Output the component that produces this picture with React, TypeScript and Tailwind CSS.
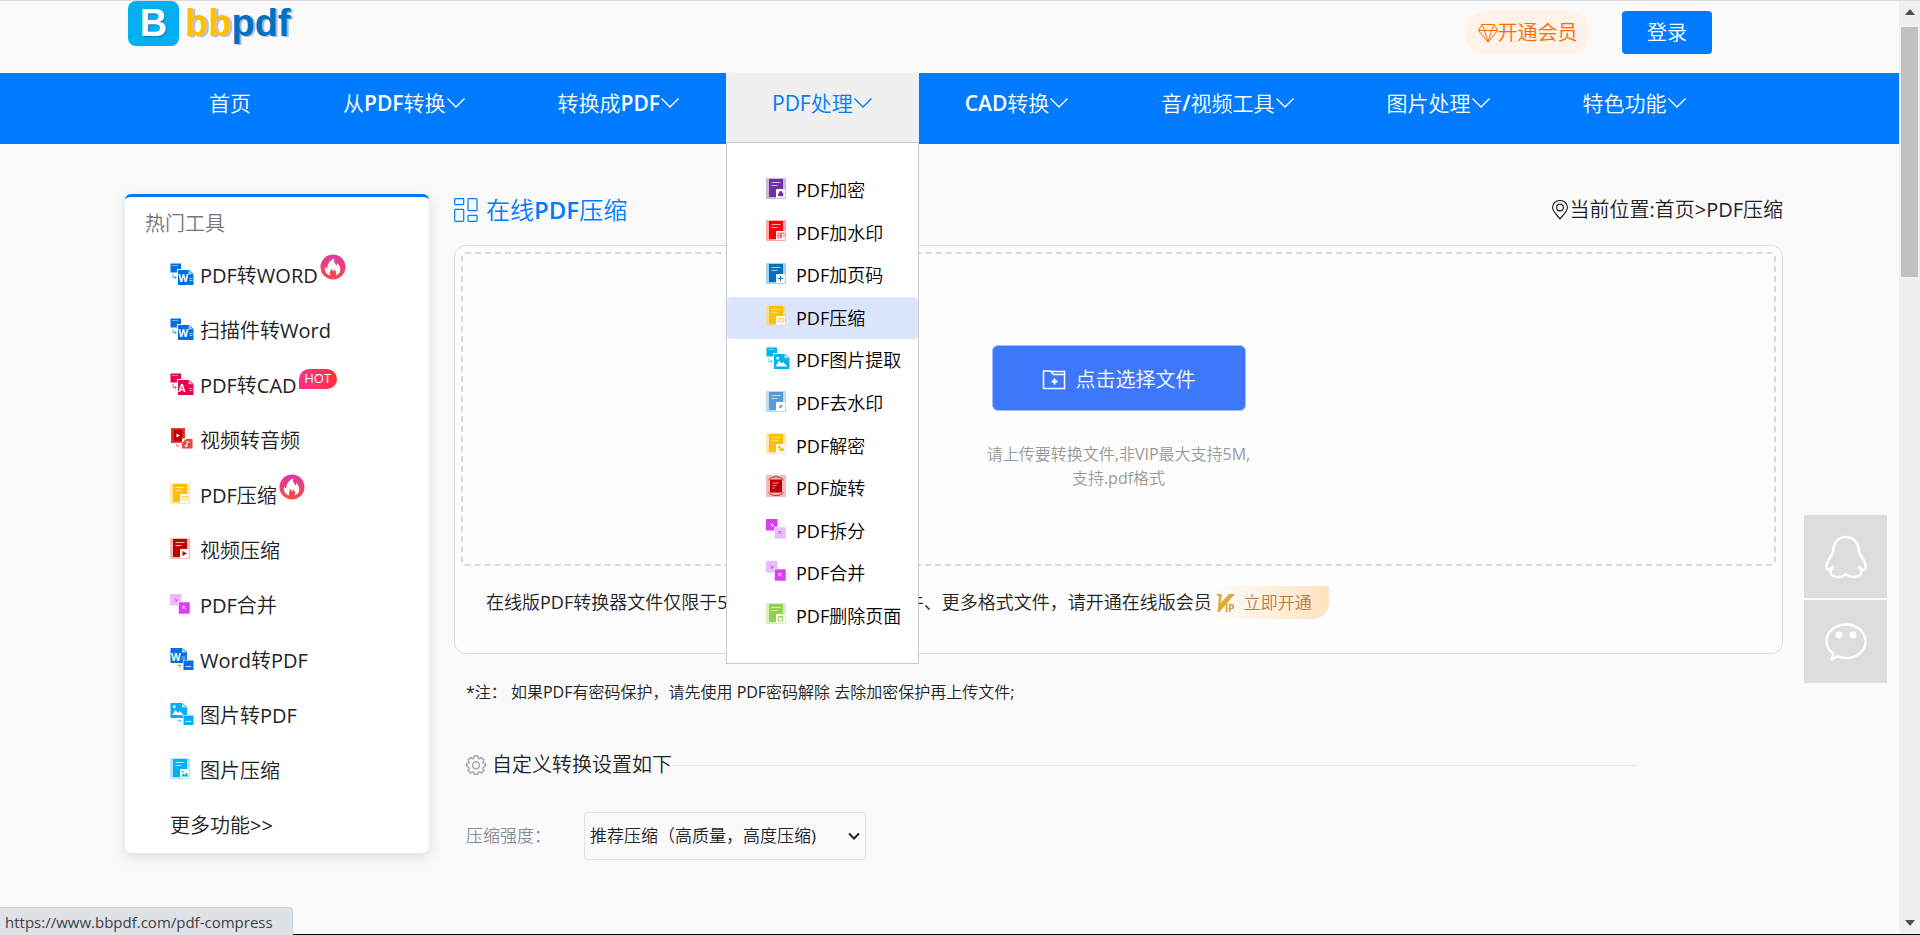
import React from "react";

type Glyph = "lock" | "stamp" | "plus" | "tag" | "drop" | "unlock" | "play" | "image" | "trash";

/* A document on a pale tile, with a small action badge in its corner. */
function DocIcon({ color, pale, glyph }: { color: string; pale: string; glyph: Glyph }) {
  return (
    <svg viewBox="0 0 20 21" className="h-[21px] w-5" aria-hidden="true">
      <rect width="20" height="21" rx="1" fill={pale} />
      <path d="M3 1h14v18H3z" fill={color} />
      <path d="M5.5 4.5h9M5.5 7.5h6" stroke={pale} strokeWidth="1" />
      <rect x="10" y="11" width="9" height="9" rx="1" fill="#fff" />
      {glyph === "lock" && <path d="M12.5 15h4.5v3h-4.5zM13.5 15v-1.5h2.5V15" fill={color} stroke={color} strokeWidth=".5" />}
      {glyph === "unlock" && <path d="M13.5 15.5h4V18h-4zM12.3 15v-1.8h2V15" fill={color} stroke={color} strokeWidth=".6" />}
      {glyph === "stamp" && <path d="M12 13h2.5v5M12 13v5h2M15.5 18v-5H18v4M12 15.5h2.5" fill="none" stroke={color} strokeWidth=".6" />}
      {glyph === "plus" && <path d="M14.5 13v5M12 15.5h5" stroke={color} strokeWidth="1" />}
      {glyph === "tag" && <path d="M12 13.5h6M12 13.5v3h2l1 1.5 1-1.5h2v-3M13.5 15h3" fill="none" stroke={color} strokeWidth=".7" />}
      {glyph === "drop" && <path d="M13 17.5l.5-2.5 2-1.5 1 1.5-1.5 2z" fill={color} />}
      {glyph === "play" && <path d="M12.5 13l4.5 2.5-4.5 2.5z" fill={color} />}
      {glyph === "image" && <path d="M11 18.5l2.3-3 1.4 1.4 1.6-2.4 2.2 4zM12 13h1.5v1.5H12z" fill={color} />}
      {glyph === "trash" && <path d="M12.5 14h4v4.2h-4zM12 13.6h5" fill="none" stroke={color} strokeWidth=".9" />}
    </svg>
  );
}

/* Small source page handing over to a large target page. */
function ToIcon({ color, letter }: { color: string; letter?: string }) {
  return (
    <svg viewBox="0 0 24 22" className="h-[22px] w-6" aria-hidden="true">
      <rect x=".5" y=".5" width="10.5" height="9" fill={color} />
      <path d="M2 2.5h6" stroke="#fff" strokeWidth=".8" opacity=".6" />
      <path d="M3 11v3.5h3M4.8 13l1.5 1.5L4.8 16" fill="none" stroke={color} strokeWidth=".9" opacity=".7" />
      <path d="M7 6h12l5 4v12H7z" fill="#fff" />
      <path d="M8 7h11l4.5 4v11H8z" fill={color} />
      <path d="M18.5 7.5v3.8H23z" fill="#fff" opacity=".7" />
      {letter ? (
        <>
          <text x="8.5" y="19" fontSize="10" fontWeight="700" fill="#fff" fontFamily="Open Sans, sans-serif">{letter}</text>
          <path d="M19.5 15.5h3M19.5 17.5h3" stroke="#fff" strokeWidth=".8" opacity=".8" />
        </>
      ) : (
        <path d="M9.5 19.5l3.500-6 2.500 3 1.500-1.500 4.500 4.500zM10.500 10H13v2.500h-2.500z" fill="#fff" />
      )}
    </svg>
  );
}

/* Large source page handing over to a small target page. */
function FromIcon({ color, letter }: { color: string; letter?: string }) {
  return (
    <svg viewBox="0 0 24 22" className="h-[22px] w-6" aria-hidden="true">
      <path d="M.5 0H12l5 4v11H.5z" fill={color} />
      <path d="M12 .5v4h4.5z" fill="#fff" opacity=".7" />
      {letter ? (
        <>
          <text x="1" y="12.5" fontSize="10" fontWeight="700" fill="#fff" fontFamily="Open Sans, sans-serif">{letter}</text>
          <path d="M11.5 9h4M11.5 11h4" stroke="#fff" strokeWidth=".8" opacity=".8" />
        </>
      ) : (
        <path d="M2 12l3.500-5L8 10l1.800-2 3.700 4zM3 2.500h2.500V5H3z" fill="#fff" />
      )}
      <path d="M7.500 17.500h3M9.500 16.500l1.500 2-1.500 1.500" fill="none" stroke={color} strokeWidth=".9" opacity=".7" />
      <rect x="13" y="12" width="11" height="10" fill="#fff" />
      <rect x="13.5" y="12.5" width="10" height="9.5" fill={color} />
      <path d="M15.500 18.500h6" stroke="#fff" strokeWidth="1.2" opacity=".7" />
    </svg>
  );
}

function VideoAudioIcon() {
  return (
    <svg viewBox="0 0 24 22" className="h-[22px] w-6" aria-hidden="true">
      <rect x="1" width="14" height="15" fill="#e8483f" />
      <rect x="3.5" y="1.5" width="9" height="12" fill="#c00000" />
      <path d="M6.500 5.500l3.500 2-3.500 2z" fill="#fff" />
      <path d="M2.200 1v13M13.800 1v13" stroke="#c00000" strokeWidth="1" strokeDasharray="1.5 1.5" />
      <path d="M6 16.500l3 2" stroke="#e8483f" strokeWidth="1" />
      <rect x="12" y="10.5" width="11" height="10.5" fill="#fff" />
      <path d="M16 11h6.500v9.500H12V15z" fill="#e8483f" />
      <path d="M17 18v-4.500l2.500 1" fill="none" stroke="#fff" strokeWidth="1" />
      <circle cx="16" cy="18" r="1.2" fill="#fff" />
    </svg>
  );
}

function PairIcon({ first, second }: { first: string; second: string }) {
  return (
    <svg viewBox="0 0 20 20" className="h-5 w-5" aria-hidden="true">
      <rect width="11.5" height="11.5" fill={first} />
      <rect x="8.5" y="8" width="11.5" height="12" fill={second} stroke="#fff" strokeWidth=".6" />
      <path d="M4 4l3 3M7 4.800V7H4.800" fill="none" stroke={first === "#e7bdfb" ? "#dc3cf5" : "#fff"} strokeWidth=".8" />
      <path d="M13 12.500l3 3M13 15v-2.500h2.500" fill="none" stroke={second === "#e7bdfb" ? "#dc3cf5" : "#fff"} strokeWidth=".8" />
    </svg>
  );
}

function RotateIcon() {
  return (
    <svg viewBox="0 0 20 22" className="h-[22px] w-5" aria-hidden="true">
      <rect width="20" height="22" rx="1" fill="#f0bcbc" />
      <rect x="4" y="4.5" width="12" height="13" fill="#c00000" />
      <path d="M6.500 8h6M6.500 10.500h4M6.500 13h2.500" stroke="#e99" strokeWidth="1" />
      <path d="M2.500 5C6 .8 14 .8 17.500 5M2.500 17.500c3.500 4 11.500 4 15 0" fill="none" stroke="#c8262a" strokeWidth="1" />
    </svg>
  );
}

function FlameBadge() {
  return (
    <svg viewBox="0 0 26 26" className="h-[26px] w-[26px] self-start" aria-hidden="true">
      <defs>
        <linearGradient id="flame" x1="0" y1="0" x2="0" y2="1">
          <stop offset="0" stopColor="#dd37a8" />
          <stop offset="1" stopColor="#fd4a42" />
        </linearGradient>
      </defs>
      <circle cx="13" cy="13" r="12.5" fill="url(#flame)" />
      <path d="M10.500 21.500C6 20.500 4 17 5.200 12.500c.6 1.200 1.300 1.800 2.300 2C7.200 10 9.800 6.500 14.300 4.500c-.8 3 .4 4.700 2 7 .7-.6 1-1.500.8-2.700 3.600 3.400 5.400 10.200-1.300 12.700 1-2.300.4-4-1.200-6-.4 1.200-1 1.700-1.600 2-.2-1-.6-1.700-1.300-2.400-1.700 2-2.400 4.200-1.200 6.400z" fill="#fff" />
    </svg>
  );
}

function Chevron() {
  return (
    <svg viewBox="0 0 20 12" className="h-3 w-5" fill="none" stroke="currentColor" strokeWidth="1.4" aria-hidden="true">
      <path d="M1.500 1.500L10 10l8.500-8.500" />
    </svg>
  );
}

const nav = ["从PDF转换", "转换成PDF", "PDF处理", "CAD转换", "音/视频工具", "图片处理", "特色功能"];

const violet = "#dc3cf5";
const lilac = "#e7bdfb";

const processing: { label: string; icon: React.ReactNode }[] = [
  { label: "PDF加密", icon: <DocIcon color="#7030a0" pale="#cdb6de" glyph="lock" /> },
  { label: "PDF加水印", icon: <DocIcon color="#ff0000" pale="#ffa9a9" glyph="stamp" /> },
  { label: "PDF加页码", icon: <DocIcon color="#0070c0" pale="#a6cfec" glyph="plus" /> },
  { label: "PDF压缩", icon: <DocIcon color="#ffc000" pale="#f0dca0" glyph="tag" /> },
  { label: "PDF图片提取", icon: <ToIcon color="#00b0f0" /> },
  { label: "PDF去水印", icon: <DocIcon color="#5b9bd5" pale="#c2daf0" glyph="drop" /> },
  { label: "PDF解密", icon: <DocIcon color="#ffc000" pale="#ffe9a8" glyph="unlock" /> },
  { label: "PDF旋转", icon: <RotateIcon /> },
  { label: "PDF拆分", icon: <PairIcon first={violet} second={lilac} /> },
  { label: "PDF合并", icon: <PairIcon first={lilac} second={violet} /> },
  { label: "PDF删除页面", icon: <DocIcon color="#92d050" pale="#d8efc2" glyph="trash" /> },
];

const hotTools: { label: string; icon: React.ReactNode; badge?: "flame" | "hot" }[] = [
  { label: "PDF转WORD", icon: <ToIcon color="#0070e0" letter="W" />, badge: "flame" },
  { label: "扫描件转Word", icon: <ToIcon color="#0070e0" letter="W" /> },
  { label: "PDF转CAD", icon: <ToIcon color="#e6004f" letter="A" />, badge: "hot" },
  { label: "视频转音频", icon: <VideoAudioIcon /> },
  { label: "PDF压缩", icon: <DocIcon color="#ffc000" pale="#ffe9a8" glyph="tag" />, badge: "flame" },
  { label: "视频压缩", icon: <DocIcon color="#c00000" pale="#f0bcbc" glyph="play" /> },
  { label: "PDF合并", icon: <PairIcon first={lilac} second={violet} /> },
  { label: "Word转PDF", icon: <FromIcon color="#0070e0" letter="W" /> },
  { label: "图片转PDF", icon: <FromIcon color="#00b0f0" /> },
  { label: "图片压缩", icon: <DocIcon color="#00b0f0" pale="#b3e7fb" glyph="image" /> },
];

function Header() {
  return (
    <header className="flex h-[73px] items-start justify-between border-t border-[#dcdcdc] pr-[187px] pl-32">
      <a href="#home" className="flex items-start gap-[6px] font-['Liberation_Sans',sans-serif] text-[38px] leading-[45px] font-bold">
        <span className="flex h-[45px] w-[51px] items-center justify-center rounded-lg bg-[#00b0f0] text-white [text-shadow:1px_1px_1px_#0a78b8]">
          B
        </span>
        <span className="text-[#0070c0] [text-shadow:2px_1px_0_#a9b8dc]">
          <span className="text-[#ffc000]">bb</span>pdf
        </span>
      </a>
      <div className="flex gap-8 pt-[10px]">
        <a href="#vip" className="flex h-[43px] w-[125px] items-center justify-center rounded-full bg-[#fff2e8] text-xl text-[#ff6a00]">
          <svg viewBox="0 0 20 20" className="h-5 w-5" fill="none" stroke="currentColor" strokeWidth="1" aria-hidden="true">
            <path d="M4 1.500h12l3.500 6L10 19 .5 7.500zM.5 7.500h19M4 1.500l2.500 6L10 19l3.500-11.500 2.500-6" />
          </svg>
          开通会员
        </a>
        <button type="button" className="h-[43px] w-[90px] rounded bg-[#007bff] pt-px text-xl text-white">登录</button>
      </div>
    </header>
  );
}

function Nav() {
  return (
    <nav className="flex h-[71px] bg-[#007bff] pl-[163px] text-[21px] leading-[30px] whitespace-nowrap text-white">
      <a href="#home" className="px-[46px] pt-[15px]">首页</a>
      {nav.map((label) =>
        label === "PDF处理" ? (
          <div key={label} className="relative bg-[#f0f0f0] text-[#007bff]">
            <a href="#process" className="flex items-center px-[46px] pt-[15px]">
              {label}
              <Chevron />
            </a>
            <ul className="absolute inset-x-0 top-[69px] z-10 flex h-[522px] flex-col border border-[#ccc] bg-white pt-[26px] pb-[26px] text-lg text-black">
              {processing.map((item) => (
                <li key={item.label} className="flex flex-1">
                  <a
                    href={"#" + item.label}
                    className={
                      item.label === "PDF压缩"
                        ? "flex flex-1 items-center gap-[6px] rounded bg-[#dbe6fe] pl-[39px]"
                        : "flex flex-1 items-center gap-[6px] pl-[39px]"
                    }
                  >
                    <span className="flex w-6 pb-1">{item.icon}</span>
                    {item.label}
                  </a>
                </li>
              ))}
            </ul>
          </div>
        ) : (
          <a key={label} href={"#" + label} className="flex items-center self-start px-[46px] pt-[15px] font-semibold">
            <NavLabel text={label} />
            <Chevron />
          </a>
        ),
      )}
    </nav>
  );
}

/* Latin runs are semibold, Chinese runs stay light. */
function NavLabel({ text }: { text: string }) {
  return (
    <span>
      {text.split(/([A-Za-z/]+)/).map((part, i) =>
        /[A-Za-z/]/.test(part) ? part : <span key={i} className="font-normal">{part}</span>,
      )}
    </span>
  );
}

function Sidebar() {
  return (
    <aside className="w-[304px] shrink-0 self-start rounded-md border-t-[3px] border-[#007bff] bg-white shadow-[0_4px_14px_rgba(0,0,0,0.12)]">
      <h2 className="pt-[13px] pl-5 text-xl leading-7 text-[#777]">热门工具</h2>
      <ul className="pt-[10px] text-xl text-[#222]">
        {hotTools.map((tool) => (
          <li key={tool.label} className="flex h-[55px] pl-[45px]">
            <a href={"#" + tool.label} className="flex items-center">
              <span className="flex w-[30px] justify-start pb-1">{tool.icon}</span>
              {tool.label}
              {tool.badge === "flame" && <span className="ml-[2px] flex self-start pt-[6px]"><FlameBadge /></span>}
              {tool.badge === "hot" && (
                <span className="mb-[14px] ml-[2px] flex h-5 w-[38px] items-center justify-center rounded-full rounded-bl-none bg-linear-to-r from-[#ff2e8a] to-[#ff3030] text-[13px] text-white">
                  HOT
                </span>
              )}
            </a>
          </li>
        ))}
        <li className="flex h-[55px] items-center pl-[45px]">
          <a href="#more">更多功能&gt;&gt;</a>
        </li>
      </ul>
    </aside>
  );
}

function Workspace() {
  return (
    <main className="min-w-0 flex-1 text-[#222]">
      <div className="flex h-[51px] items-start justify-between">
        <h1 className="flex items-center gap-2 text-2xl leading-8 text-[#007bff]">
          <svg viewBox="0 0 24 24" className="h-6 w-6" fill="none" stroke="currentColor" strokeWidth="1.2" aria-hidden="true">
            <rect x=".7" y=".7" width="9" height="6" rx=".8" />
            <rect x="14" y=".7" width="9" height="12" rx=".8" />
            <rect x=".7" y="11.3" width="9" height="12" rx=".8" />
            <rect x="14" y="17.3" width="9" height="6" rx=".8" />
          </svg>
          <span>在线<span className="font-semibold">PDF</span>压缩</span>
        </h1>
        <div className="flex items-center text-xl leading-8">
          <svg viewBox="0 0 18 20" className="h-5 w-[18px]" fill="none" stroke="currentColor" strokeWidth="1.2" aria-hidden="true">
            <path d="M9 19C5.500 14.500 1.500 11 1.500 7.500a7.500 7 0 0 1 15 0C16.500 11 12.500 14.500 9 19z" />
            <circle cx="9" cy="7.500" r="3.300" />
          </svg>
          当前位置:<a href="#home">首页</a>&gt;<a href="#compress">PDF压缩</a>
        </div>
      </div>

      <section className="rounded-xl border border-[#ddd] bg-[#fdfdfd] p-[6px]">
        <div className="flex h-[314px] flex-col items-center rounded border-2 border-dashed border-[#dadada] pt-[91px]">
          <button type="button" className="flex h-[66px] w-[254px] items-center justify-center gap-[10px] rounded-md border border-[#9dbbfd] bg-[#3d78fb] pt-1 text-xl text-white">
            <svg viewBox="0 0 24 20" className="h-5 w-6" fill="none" stroke="currentColor" strokeWidth="1.5" aria-hidden="true">
              <path d="M1.500 1h7l3 3.500h11V18.500h-21zM9 1.500h13.500V5" />
              <path d="M12.500 8.500v6M9.500 11.500h6" strokeWidth="2" />
            </svg>
            点击选择文件
          </button>
          <p className="pt-[31px] text-center leading-6 text-[#999]">
            请上传要转换文件,非VIP最大支持5M,
            <br />
            支持.pdf格式
          </p>
        </div>
        <div className="flex h-[81px] items-start pt-5 pl-[25px] text-lg leading-8 whitespace-nowrap">
          <p>在线版PDF转换器文件仅限于5M以内，如需要更大文件、更多格式文件，请开通在线版会员</p>
          <a href="#vip" className="flex h-[33px] w-[117px] items-center gap-2 rounded-br-2xl bg-linear-to-r from-[#fdfdfd] to-[#fde3bf] pl-1 text-[17px] text-[#bd7a45]">
            <svg viewBox="0 0 20 20" className="h-5 w-5" aria-hidden="true">
              <path d="M0 1h6l-1.500 9L13 1h6L3.500 19H1.500L3 4z" fill="#e0a93c" />
              <text x="9" y="19" fontSize="10" fontWeight="700" fill="#d09a3c" fontFamily="Open Sans, sans-serif">IP</text>
            </svg>
            立即开通
          </a>
        </div>
      </section>

      <p className="pt-[26px] pl-3 leading-6 whitespace-pre">*注： 如果PDF有密码保护，请先使用 <a href="#decrypt">PDF密码解除</a> 去除加密保护再上传文件;</p>

      <div className="mr-[146px] flex items-center pt-[47px] pl-3 text-xl leading-7">
        <svg viewBox="0 0 20 20" className="mr-[6px] h-5 w-5" fill="none" stroke="#a3a6b0" strokeWidth="1.5" aria-hidden="true">
          <path d="M8.300 1h3.400l.6 2.200 1.200.5 2-1.100 2.400 2.400-1.100 2 .5 1.200 1.900.6v2.800l-1.900.7-.5 1.200 1.100 2-2.400 2.400-2-1.100-1.200.5-.6 1.900H8.300l-.6-1.900-1.200-.5-2 1.100-2.400-2.400 1.100-2-.5-1.200L.8 11.600V8.800l1.900-.6.5-1.200-1.100-2 2.400-2.400 2 1.100 1.200-.5z" />
          <circle cx="10" cy="10.200" r="3.500" />
        </svg>
        <h2>自定义转换设置如下</h2>
        <span className="h-px flex-1 bg-[#ebebeb]" />
      </div>

      <div className="flex items-center pt-[33px] pl-3 text-[17px]">
        <label htmlFor="level" className="w-[118px] text-[#888b99]">压缩强度：</label>
        <div className="relative flex items-center">
          <select id="level" className="h-[48px] w-[282px] appearance-none rounded border border-[#e2e2e2] bg-[#fafafa] pl-[5px]">
            <option>推荐压缩（高质量，高度压缩)</option>
          </select>
          <svg viewBox="0 0 12 8" className="pointer-events-none absolute right-[6px] h-2 w-3" fill="none" stroke="#222" strokeWidth="2" aria-hidden="true">
            <path d="M1 1.500l5 5 5-5" />
          </svg>
        </div>
      </div>
    </main>
  );
}

function ContactButtons() {
  return (
    <div className="absolute top-[515px] right-3 flex flex-col gap-[2px]">
      <button type="button" aria-label="QQ" className="flex h-[83px] w-[83px] items-center justify-center bg-[#ddd]">
        <svg viewBox="0 0 42 44" className="h-11 w-[42px]" fill="none" stroke="#fff" strokeWidth="2.4" strokeLinejoin="round" strokeLinecap="round" aria-hidden="true">
          <path d="M21 2C13 2 8.500 8 8.300 15c0 2-1 3.500-2 5.500C3 25 1 29 1.500 32.500c.3 2 1.300 3 3 2l3.500-2.500-2.500 4c-.5 4 3 6 8 6 3 0 5.500-1 7.500-3 2 2 4.500 3 7.500 3 5 0 8.500-2 8-6L34 32l3.500 2.500c1.700 1 2.700 0 3-2 .5-3.500-1.500-7.500-4.800-12-1-2-2-3.500-2-5.500C33.500 8 29 2 21 2z" />
        </svg>
      </button>
      <button type="button" aria-label="微信" className="flex h-[83px] w-[83px] items-center justify-center bg-[#ddd]">
        <svg viewBox="0 0 42 38" className="h-[38px] w-[42px]" fill="none" stroke="#fff" strokeWidth="2.4" strokeLinejoin="round" aria-hidden="true">
          <path d="M21 1.500c11 0 19.500 7.500 19.500 17S32 35 21 35c-3 0-6-.6-8.500-1.700L6.500 36.500l1.700-6C4 27.500 1.500 23.500 1.500 18.500 1.500 9 10 1.500 21 1.500z" />
          <circle cx="14" cy="12" r="3.400" fill="#fff" stroke="none" />
          <circle cx="28" cy="12" r="3.400" fill="#fff" stroke="none" />
        </svg>
      </button>
    </div>
  );
}

export default function App() {
  return (
    <div className="flex h-screen overflow-hidden bg-[#fafafa] font-['Open_Sans','Noto_Sans_CJK_SC_DemiLight','Noto_Sans_CJK_SC_Light','Noto_Sans_CJK_SC',sans-serif] font-normal">
      <div className="relative min-w-0 flex-1">
        <Header />
        <Nav />
        <div className="flex gap-[25px] pt-[50px] pr-[116px] pl-[125px]">
          <Sidebar />
          <Workspace />
        </div>
        <ContactButtons />
      </div>
      <div className="flex w-[21px] flex-col items-center justify-between border-t border-[#dcdcdc] bg-[#f0f0f0]" aria-hidden="true">
        <div className="flex w-full flex-col items-center">
          <svg viewBox="0 0 10 6" className="mt-2 mb-3 h-[6px] w-[10px]"><path d="M0 6l5-6 5 6z" fill="#505050" /></svg>
          <div className="h-[250px] w-[17px] bg-[#c1c1c1]" />
        </div>
        <svg viewBox="0 0 10 6" className="mb-[9px] h-[6px] w-[10px]"><path d="M0 0l5 6 5-6z" fill="#505050" /></svg>
      </div>
      <div className="fixed inset-x-0 bottom-0 flex items-end">
        <span className="flex h-7 w-[293px] items-center rounded-tr border-t border-r border-[#cfd2d8] bg-[#dee1e6] pt-px pl-[5px] text-[15px] text-[#3c4043]">
          https://www.bbpdf.com/pdf-compress
        </span>
        <span className="h-px flex-1 bg-black" />
      </div>
    </div>
  );
}
